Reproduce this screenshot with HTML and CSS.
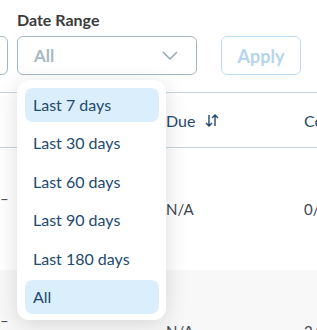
FILE: index.html
```html
<!DOCTYPE html>
<html lang="en">
<head>
  <meta charset="UTF-8" />
  <meta name="viewport" content="width=device-width, initial-scale=1" />
  <title>Date Range Filter</title>
  <link rel="stylesheet" href="styles.css">
</head>
<body>

<section class="filters">
  <div class="field field-cut">
    <span class="field-label">&nbsp;</span>
    <div class="box"></div>
  </div>
  <div class="field field-date">
    <span class="field-label">Date Range</span>
    <div class="select">
      <span>All</span>
      <svg width="16" height="9" viewBox="0 0 16 9"><path d="M1 1 L8 8 L15 1" fill="none" stroke="#93a9b4" stroke-width="1.5"/></svg>
    </div>
    <ul class="menu">
      <li class="active">Last 7 days</li>
      <li>Last 30 days</li>
      <li>Last 60 days</li>
      <li>Last 90 days</li>
      <li>Last 180 days</li>
      <li class="active">All</li>
    </ul>
  </div>
  <button class="apply">Apply</button>
</section>

<main class="table">
  <div class="row head">
    <div class="cell first"></div>
    <div class="cell">Due
      <svg class="sort" width="14" height="13" viewBox="0 0 14 13"><path d="M4 1 V12 M1 9 L4 12 L7 9 M10 12 V1 M7 4 L10 1 L13 4" fill="none" stroke="#1f4a70" stroke-width="1.4"/></svg>
    </div>
    <div class="cell">Co</div>
  </div>
  <div class="row">
    <div class="cell first"><span class="dash">–</span></div>
    <div class="cell">N/A</div>
    <div class="cell">0/</div>
  </div>
  <div class="row alt">
    <div class="cell first"><span class="dash">–</span></div>
    <div class="cell">N/A</div>
    <div class="cell">2/</div>
  </div>
</main>

</body>
</html>
```

FILE: styles.css
```css
html, body {
  overflow: hidden;
}
body {
  margin: 0;
  font-family: 'Lato', 'Open Sans', sans-serif;
  background: #fff;
  color: #333;
}
.filters {
  display: flex;
  align-items: flex-end;
  padding-top: 10px;
  margin-left: -60px;
}
.field {
  display: flex;
  flex-direction: column;
  gap: 6px;
}
.field-date {
  position: relative;
  margin-left: 9px;
}
.field-label {
  font-size: 16px;
  font-weight: 700;
  line-height: 20px;
  color: #3b3b3b;
}
.box {
  box-sizing: border-box;
  width: 68px;
  height: 39px;
  border: 1px solid #a3b8c2;
  border-radius: 6px;
}
.select {
  box-sizing: border-box;
  width: 180px;
  height: 39px;
  border: 1px solid #a3b8c2;
  border-radius: 6px;
  display: flex;
  align-items: center;
  justify-content: space-between;
  padding: 0 18px 0 16px;
  font-size: 17px;
  font-weight: 700;
  color: #a7b8c2;
}
.menu {
  position: absolute;
  top: 70px;
  left: 0;
  width: 134px;
  margin: 0;
  padding: 8px 7px 6px 8px;
  list-style: none;
  background: #fff;
  border-radius: 12px;
  box-shadow: 0 4px 22px rgba(0,0,0,0.14);
  display: flex;
  flex-direction: column;
  gap: 4.4px;
  z-index: 2;
}
.menu li {
  height: 34px;
  line-height: 34px;
  padding-left: 8px;
  border-radius: 8px;
  font-size: 16px;
  color: #1d4a70;
}
.menu li.active {
  background: #dbeefc;
}
.apply {
  box-sizing: border-box;
  margin-left: 24px;
  width: 80px;
  height: 39px;
  background: #fff;
  border: 1px solid #bcdcf3;
  border-radius: 6px;
  font-family: inherit;
  font-size: 18px;
  font-weight: 700;
  color: #b5d5ef;
}
.table {
  margin-top: 17px;
  border-top: 1px solid #c8d6de;
  width: 317px;
}
.row {
  display: grid;
  grid-template-columns: 166px 138px 13px;
  height: 122px;
  align-items: center;
  font-size: 15px;
  color: #3d4650;
  overflow: hidden;
}
.row.head {
  height: 54px;
  border-bottom: 1px solid #c8d6de;
  font-size: 16px;
  color: #1f4a70;
}
.row.alt {
  background: #f8f8f8;
}
.cell {
  display: flex;
  align-items: center;
  white-space: nowrap;
}
.sort {
  margin-left: 10px;
}
.dash {
  padding-bottom: 22px;
  color: #555;
}
```
